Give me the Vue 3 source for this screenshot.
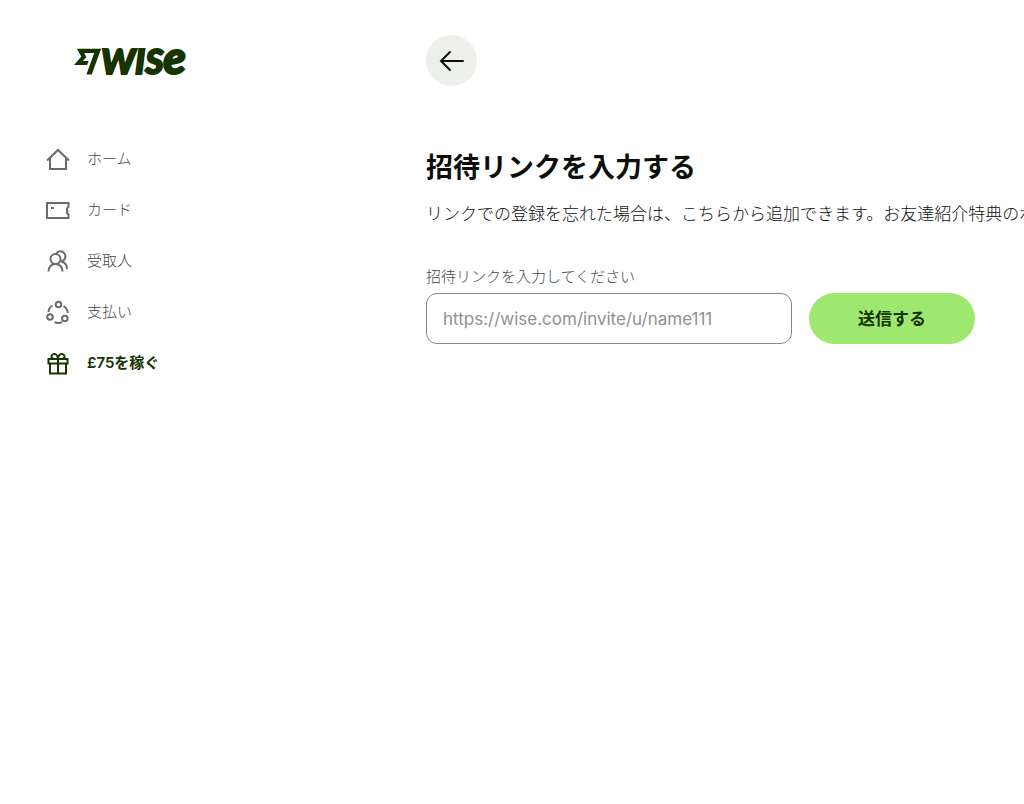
<script setup>
import { ref } from 'vue'

const inviteLink = ref('')

const items = [
  { label: 'ホーム', icon: 'home' },
  { label: 'カード', icon: 'card' },
  { label: '受取人', icon: 'people' },
  { label: '支払い', icon: 'payments' },
  { label: '£75を稼ぐ', icon: 'gift', active: true },
]
</script>

<template>
  <div class="page">
    <aside class="sidebar">
      <a class="logo" href="#" aria-label="Wise">
        <svg width="116" height="32" viewBox="0 0 116 32" aria-hidden="true">
          <path transform="translate(1 3) scale(1.13)" d="M6.488 7.469 0 15.050h11.585l1.301-3.576H7.922l3.033-3.507.010-.092L8.993 4.480h8.873l-6.878 18.925h4.706L24 .595H2.543l3.945 6.874Z" fill="#163300" />
          <text class="wordmark" x="28" y="29">WIS<tspan class="wordmark-e">e</tspan></text>
        </svg>
      </a>
      <nav class="nav">
        <a v-for="item in items" :key="item.icon" href="#" class="nav-item" :class="{ active: item.active }">
          <svg class="icon" width="24" height="24" viewBox="0 0 24 24" aria-hidden="true">
            <path v-if="item.icon === 'home'" d="M1 13.500L12 3L23 13.500M4 11V22H20V11" />
            <template v-else-if="item.icon === 'card'">
              <path d="M1 5H22.500V9C20.500 10.500 20.500 11.500 21.500 12.800C20.500 14 20.500 15 22.500 16.500V20H1Z" />
              <path d="M5 10H8" />
            </template>
            <template v-else-if="item.icon === 'people'">
              <circle cx="9.500" cy="10" r="5" />
              <path d="M2.500 22.500C2.500 18 5.500 15 9.500 15S16.500 18 16.500 22.500" />
              <path d="M10 5C11.500 2 15 1.500 17.500 3.500C20.500 6 20 11 15.500 12.500C19 13.500 21 16 21 20" />
            </template>
            <template v-else-if="item.icon === 'payments'">
              <circle cx="12.500" cy="4.500" r="2.800" />
              <circle cx="4" cy="17" r="2.800" />
              <circle cx="18.800" cy="18.500" r="2.800" />
              <path d="M6.500 5.500C4 7 2.600 9.300 2.500 12M17.500 6C20 7.600 21.600 10 21.700 13M8.500 22.300C11 23.200 13.500 23.200 16 22.300" />
            </template>
            <template v-else>
              <path d="M2.500 8H21.500V12.500H2.500ZM4 12.500V22.500H20V12.500M12 8V22.500" />
              <path d="M12 8H9C6 8 5 6.500 5.500 5C6 3 8.500 2.500 10 3.500C11.500 4.500 12 6 12 8C12 6 12.500 4.500 14 3.500C15.500 2.500 18 3 18.500 5C19 6.500 18 8 15 8Z" />
            </template>
          </svg>
          <span>{{ item.label }}</span>
        </a>
      </nav>
    </aside>

    <main class="content">
      <button class="back" type="button" aria-label="戻る">
        <svg width="25" height="25" viewBox="0 0 25 25" aria-hidden="true">
          <path d="M24 13H2M11 4L2 13L11 22" />
        </svg>
      </button>
      <h1>招待リンクを入力する</h1>
      <p class="lead">リンクでの登録を忘れた場合は、こちらから追加できます。お友達紹介特典のボ</p>
      <form @submit.prevent>
        <label for="invite">招待リンクを入力してください</label>
        <div class="row">
          <input id="invite" v-model="inviteLink" type="text" placeholder="https://wise.com/invite/u/name111" />
          <button class="submit" type="submit">送信する</button>
        </div>
      </form>
    </main>
  </div>
</template>

<style>
body {
  margin: 0;
  background: #fff;
}
</style>

<style scoped>
.page {
  display: flex;
  overflow: hidden;
  font-family: Inter, "Noto Sans CJK JP", sans-serif;
  color: #0e0f0c;
}
.sidebar {
  flex: 0 0 426px;
  box-sizing: border-box;
  padding: 45px 46px 0;
}
.logo {
  display: block;
  width: 116px;
  height: 32px;
  margin-left: 27px;
}
.logo svg {
  display: block;
  overflow: visible;
}
.wordmark {
  font: italic 900 35px Lato, sans-serif;
  fill: #163300;
  stroke: #163300;
  stroke-width: 2px;
}
.wordmark-e {
  font-size: 46px;
}
.nav {
  display: flex;
  flex-direction: column;
  margin-top: 56px;
}
.nav-item {
  display: flex;
  align-items: center;
  gap: 17px;
  height: 51px;
  color: #454745;
  font-size: 15px;
  font-weight: 300;
  line-height: 24px;
  text-decoration: none;
}
.icon {
  fill: none;
  stroke: #6a6c6a;
  stroke-width: 2;
}
.active {
  color: #163300;
  font-weight: 600;
}
.active .icon {
  stroke: #163300;
}
.content {
  flex: 1;
  min-width: 0;
  padding-top: 35px;
}
.back {
  display: flex;
  align-items: center;
  justify-content: center;
  width: 51px;
  height: 51px;
  padding: 0;
  border: 0;
  border-radius: 50%;
  background: #edefeb;
}
.back svg {
  fill: none;
  stroke: #0e0f0c;
  stroke-width: 2;
  stroke-linecap: round;
}
h1 {
  margin: 64px 0 0;
  font-size: 27px;
  font-weight: 700;
  line-height: 36px;
  white-space: nowrap;
}
.lead {
  margin: 15px 0 0;
  font-size: 17px;
  font-weight: 300;
  line-height: 26px;
  white-space: nowrap;
}
form {
  margin-top: 38px;
}
label {
  display: block;
  color: #454745;
  font-size: 15px;
  font-weight: 300;
  line-height: 24px;
}
.row {
  display: flex;
  gap: 17px;
  margin: 4px 49px 0 0;
}
input {
  flex: 1;
  min-width: 0;
  height: 51px;
  box-sizing: border-box;
  padding: 0 16px;
  border: 1px solid #868886;
  border-radius: 11px;
  background: #fff;
  color: #0e0f0c;
  font: 400 17px Inter, sans-serif;
}
input::placeholder {
  color: #8f918f;
  opacity: 1;
}
.submit {
  width: 166px;
  height: 51px;
  padding: 0 0 2px;
  border: 0;
  border-radius: 26px;
  background: #9fe870;
  color: #163300;
  font: 600 17px Inter, "Noto Sans CJK JP", sans-serif;
}
</style>
